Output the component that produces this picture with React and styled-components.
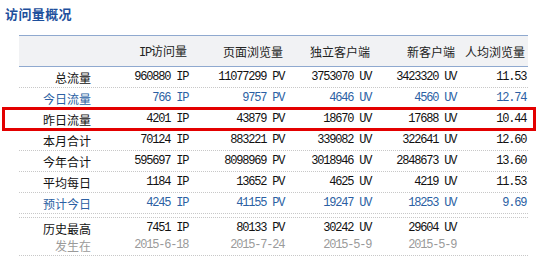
import React from 'react';
import styled, { createGlobalStyle, css } from 'styled-components';

const GlobalStyle = createGlobalStyle`
  body {
    margin: 0;
    background: #fff;
    font-family: 'Noto Sans CJK SC', sans-serif;
  }
`;

const Page = styled.div`
  width: 537px;
  height: 261px;
  overflow: hidden;
`;

const Title = styled.h2`
  margin: 0;
  padding: 5px 0 0 5px;
  height: 30px;
  box-sizing: border-box;
  font-size: 13px;
  line-height: 17px;
  font-weight: bold;
  color: #1d4f9c;
  letter-spacing: 0.4px;
`;

const Table = styled.div`
  margin-left: 19px;
  margin-top: 5px;
  width: 509px;
`;

const COLS = '75px 96px 96px 87px 85px 70px';

const HeadRow = styled.div`
  display: grid;
  grid-template-columns: ${COLS};
  height: 30px;
  align-items: center;
  background: #f1f2f4;
  border-top: 1px solid #8fa9cf;
  border-bottom: 1px solid #8fa9cf;
  color: #222;
  font-size: 12px;
`;

const Row = styled.div`
  position: relative;
  display: grid;
  grid-template-columns: ${COLS};
  height: 20px;
  align-items: center;
  border-bottom: 1px dotted #c8c8c8;
  color: ${(p) => (p.$tone === 'blue' ? '#2b5fa3' : '#111')};

  ${(p) =>
    p.$marked &&
    css`
      &::after {
        content: '';
        position: absolute;
        left: -17px;
        right: -8px;
        top: -2px;
        bottom: -2px;
        border: 3px solid #e30000;
        pointer-events: none;
      }
    `}
`;

const Spacer = styled.div`
  height: 3px;
  border-bottom: 1px dotted #c8c8c8;
`;

const HistoryRow = styled.div`
  display: grid;
  grid-template-columns: ${COLS};
  height: 38px;
  padding-top: 2px;
  box-sizing: border-box;
  border-bottom: 1px dotted #c8c8c8;
  color: #111;
`;

const Cell = styled.div`
  text-align: right;
  padding-right: 3px;
  white-space: nowrap;
`;

const Label = styled.span`
  display: block;
  font-family: 'Noto Sans CJK SC', sans-serif;
  font-size: 12px;
  line-height: 17px;
  height: 17px;
  color: ${(p) => (p.$muted ? '#9a9a9a' : 'inherit')};
`;

const Num = styled.span`
  display: block;
  font-family: 'Liberation Mono', 'DejaVu Sans Mono', monospace;
  font-size: 12px;
  line-height: 17px;
  height: 17px;
  letter-spacing: -1.2px;
  margin-right: -1.2px;
  color: ${(p) => (p.$muted ? '#9a9a9a' : 'inherit')};
`;

const Mono = styled.span`
  font-family: 'Liberation Mono', 'DejaVu Sans Mono', monospace;
  letter-spacing: -1.2px;
`;

const rows = [
  { label: '总流量', ip: '960880', pv: '11077299', uv: '3753070', nv: '3423320', avg: '11.53' },
  { label: '今日流量', tone: 'blue', ip: '766', pv: '9757', uv: '4646', nv: '4560', avg: '12.74' },
  { label: '昨日流量', marked: true, ip: '4201', pv: '43879', uv: '18670', nv: '17688', avg: '10.44' },
  { label: '本月合计', ip: '70124', pv: '883221', uv: '339082', nv: '322641', avg: '12.60' },
  { label: '今年合计', ip: '595697', pv: '8098969', uv: '3018946', nv: '2848673', avg: '13.60' },
  { label: '平均每日', ip: '1184', pv: '13652', uv: '4625', nv: '4219', avg: '11.53' },
  { label: '预计今日', tone: 'blue', ip: '4245', pv: '41155', uv: '19247', nv: '18253', avg: '9.69' },
];

const best = { ip: '7451', pv: '80133', uv: '30242', nv: '29604' };
const bestDates = { ip: '2015-6-18', pv: '2015-7-24', uv: '2015-5-9', nv: '2015-5-9' };

export default function App() {
  return (
    <Page>
      <GlobalStyle />
      <Title>访问量概况</Title>
      <Table>
        <HeadRow>
          <Cell />
          <Cell><Mono>IP</Mono>访问量</Cell>
          <Cell>页面浏览量</Cell>
          <Cell>独立客户端</Cell>
          <Cell>新客户端</Cell>
          <Cell>人均浏览量</Cell>
        </HeadRow>
        {rows.map((r) => (
          <Row key={r.label} $tone={r.tone} $marked={r.marked}>
            <Cell><Label>{r.label}</Label></Cell>
            <Cell><Num>{r.ip} IP</Num></Cell>
            <Cell><Num>{r.pv} PV</Num></Cell>
            <Cell><Num>{r.uv} UV</Num></Cell>
            <Cell><Num>{r.nv} UV</Num></Cell>
            <Cell><Num>{r.avg}</Num></Cell>
          </Row>
        ))}
        <Spacer />
        <HistoryRow>
          <Cell>
            <Label>历史最高</Label>
            <Label $muted>发生在</Label>
          </Cell>
          <Cell>
            <Num>{best.ip} IP</Num>
            <Num $muted>{bestDates.ip}</Num>
          </Cell>
          <Cell>
            <Num>{best.pv} PV</Num>
            <Num $muted>{bestDates.pv}</Num>
          </Cell>
          <Cell>
            <Num>{best.uv} UV</Num>
            <Num $muted>{bestDates.uv}</Num>
          </Cell>
          <Cell>
            <Num>{best.nv} UV</Num>
            <Num $muted>{bestDates.nv}</Num>
          </Cell>
          <Cell />
        </HistoryRow>
      </Table>
    </Page>
  );
}
